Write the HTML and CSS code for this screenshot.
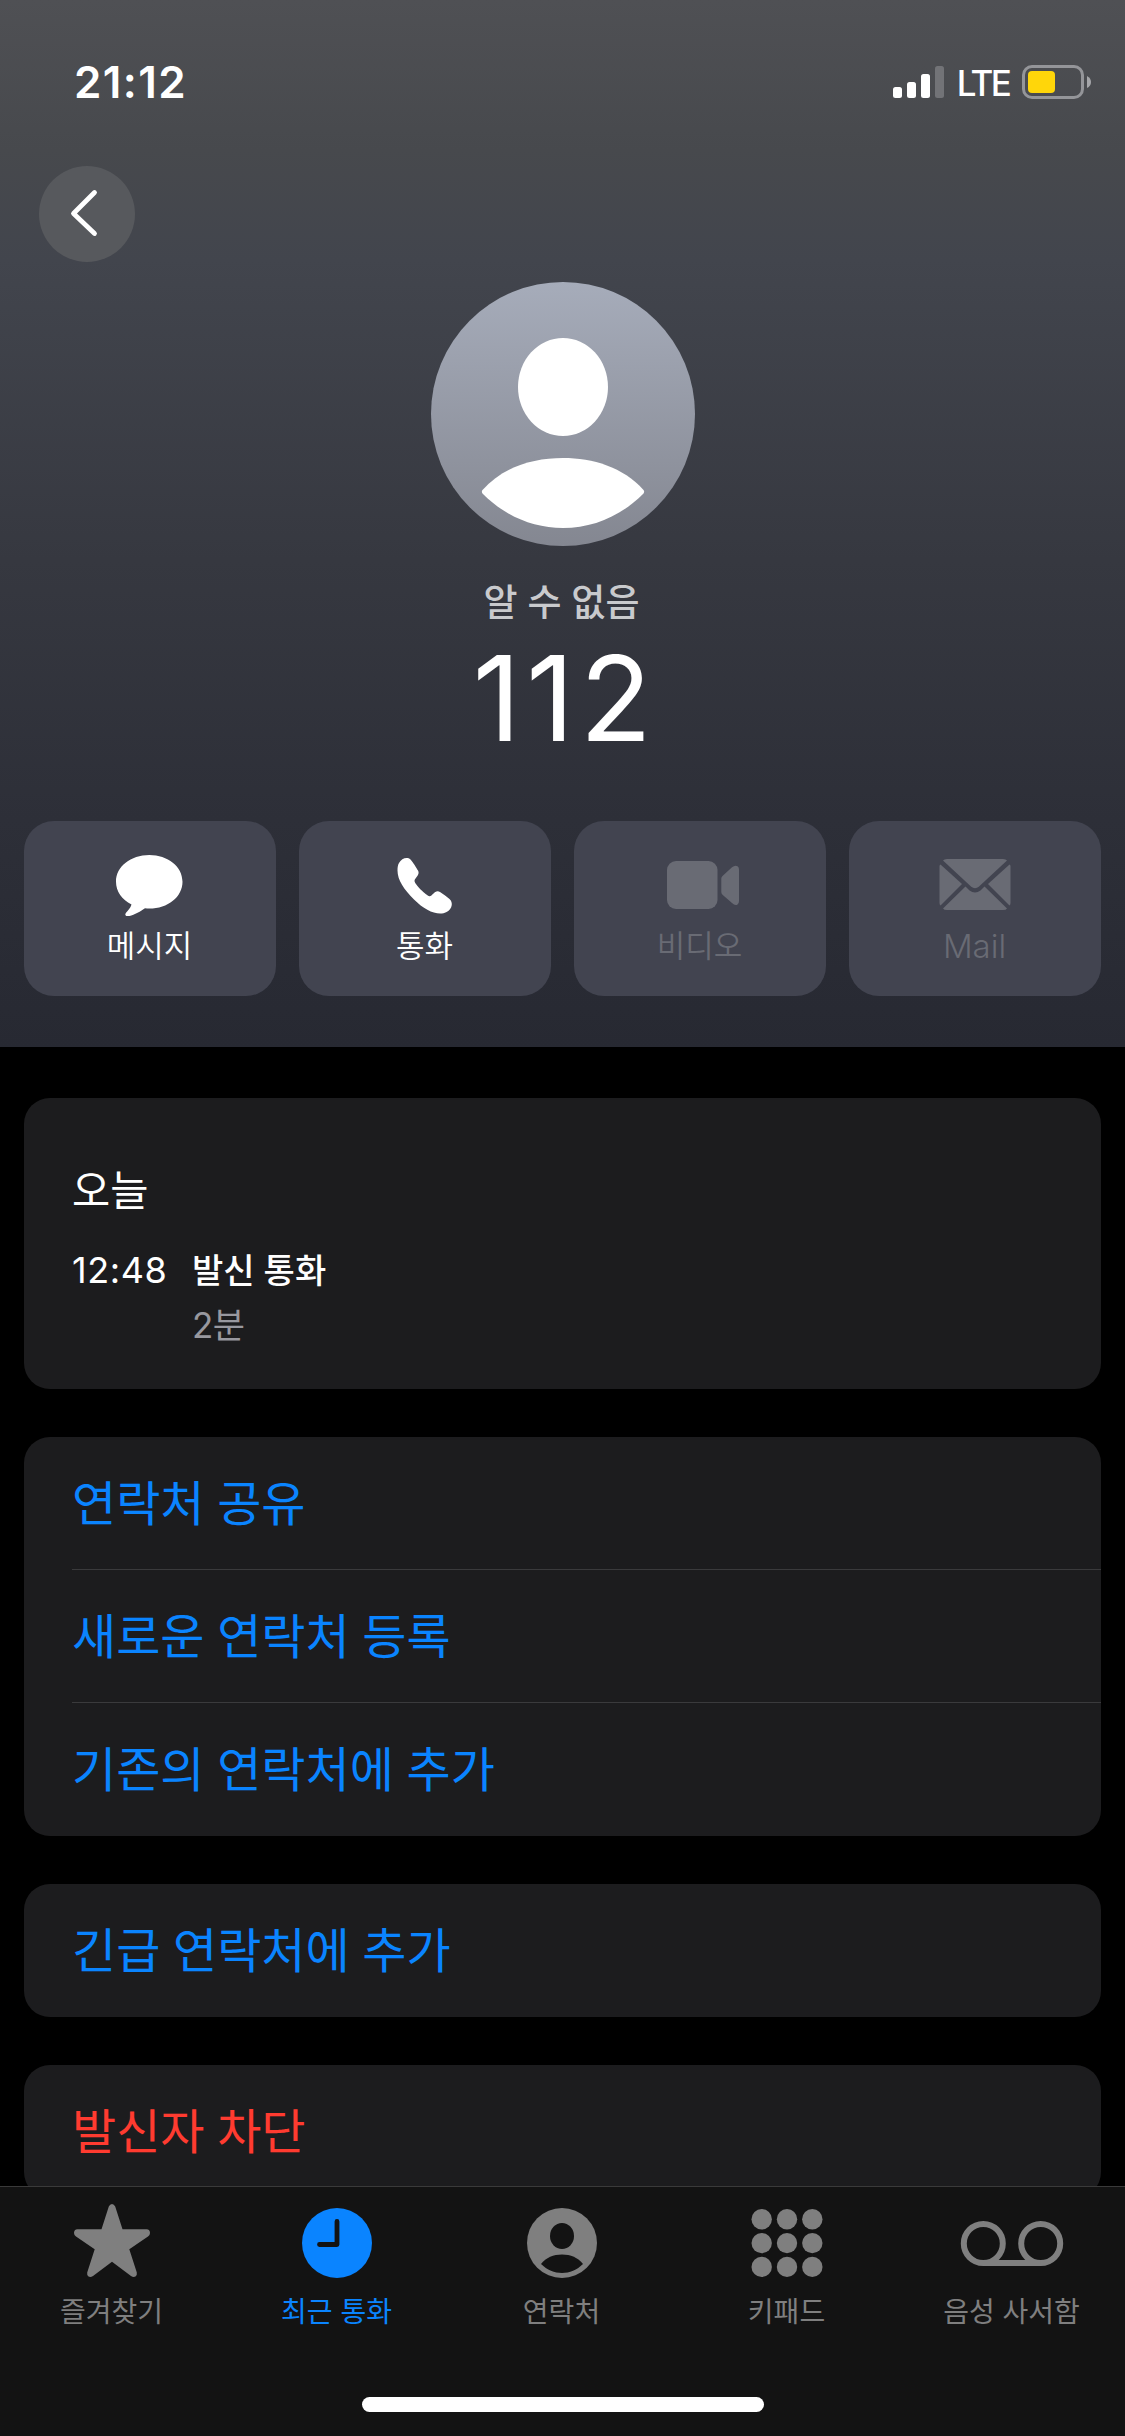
FILE: index.html
```html
<!DOCTYPE html>
<html lang="ko">
<head>
<meta charset="utf-8">
<title>112</title>
<link rel="stylesheet" href="styles.css">
</head>
<body>
<div class="phone">
  <div class="content">
    <header class="header">
      <div class="status">
        <span class="time">21:12</span>
        <div class="indicators">
          <svg class="signal" width="51" height="32" viewBox="0 0 51 32">
            <rect x="0" y="21" width="9" height="11" rx="2.5" fill="#fff"/>
            <rect x="14" y="16" width="9" height="16" rx="2.5" fill="#fff"/>
            <rect x="28" y="8" width="9" height="24" rx="2.5" fill="#fff"/>
            <rect x="42" y="0" width="9" height="32" rx="2.5" fill="#727377"/>
          </svg>
          <span class="network">LTE</span>
          <svg class="battery" width="70" height="34" viewBox="0 0 70 34">
            <rect x="1.5" y="1.5" width="59" height="31" rx="8.5" fill="none" stroke="#949599" stroke-width="3"/>
            <rect x="6" y="6" width="27" height="22" rx="4" fill="#ffd60a"/>
            <path d="M65 11Q69 13 69 17Q69 21 65 23Z" fill="#a5a6a9"/>
          </svg>
        </div>
      </div>
      <button class="back" aria-label="뒤로">
        <svg width="96" height="96" viewBox="0 0 96 96"><path d="M55.5 26.5L34.5 47.5L55.5 67.5" fill="none" stroke="#fff" stroke-width="4.8" stroke-linecap="round" stroke-linejoin="round"/></svg>
      </button>
      <svg class="avatar" width="264" height="264" viewBox="0 0 264 264">
        <defs><linearGradient id="av" x1="0" y1="0" x2="0" y2="1"><stop offset="0" stop-color="#a6acba"/><stop offset="1" stop-color="#848791"/></linearGradient></defs>
        <circle cx="132" cy="132" r="132" fill="url(#av)"/>
        <ellipse cx="132" cy="105" rx="45" ry="49" fill="#fff"/>
        <path d="M51.5 208Q50 210 52 212C74 234 102 246 132 246S190 234 212 212Q214 210 212.500 208C192 185 162 176 132 176S72 185 51.500 208Z" fill="#fff"/>
      </svg>
      <p class="subtitle">알 수 없음</p>
      <h1 class="number">112</h1>
      <div class="actions">
        <button class="action">
          <svg width="72" height="64" viewBox="0 0 72 64"><path d="M35.300 3C53.800 3 68.500 14.500 68.500 29.700S53.800 56.500 35.300 56.500C33.800 56.500 32.500 56.400 31 56.300C26.500 59.500 18.500 64.200 13.500 64.200C11 64.200 10.800 62.300 12 60.800C14 58.300 16.500 56 17.500 52.500C8 47.500 2 39.500 2 29.700C2 14.500 16.800 3 35.300 3Z" fill="#fff"/></svg>
          <span>메시지</span>
        </button>
        <button class="action">
          <svg width="72" height="64" viewBox="0 0 72 64"><path d="M10 11C12.500 6.500 18 4.500 21.500 7.500C23.500 9.500 27.500 16 29 18.500C31.500 23 25.500 26 25.500 29C26 32.500 37 43.500 40.500 44.200C43.500 44.500 46 37 51 40C53.500 41.500 58 45 60.500 47C65.500 51.500 62 59.500 54.500 61.200C46 63 35 57.500 25 47.500C15 37.500 8.500 28 8.500 18.500C8.500 15.500 8.800 13 10 11Z" fill="#fff"/></svg>
          <span>통화</span>
        </button>
        <button class="action disabled">
          <svg class="video" width="72" height="64" viewBox="0 0 72 64"><g fill="#696b74"><rect x="0" y="9" width="50.500" height="48" rx="9"/><path d="M54.300 26.500Q54.300 25 55.500 24L65 15.300Q68 12.800 70.500 14.200Q72 15.200 72 17.500V49Q72 51.500 70.500 52.500Q68 54 65 51L55.500 42.800Q54.300 41.800 54.300 40Z"/></g></svg>
          <span>비디오</span>
        </button>
        <button class="action disabled">
          <svg width="72" height="64" viewBox="0 0 72 64"><g fill="#696b74"><path d="M4 8.500Q5 7 8 7H64Q67 7 68 8.500L40 34.500Q36 38 32 34.500Z"/><path d="M.5 14Q.5 13 1.500 12.500L23 32L1.500 53.500Q.5 52.500 .5 51Z"/><path d="M71.500 14Q71.500 13 70.500 12.500L49 32L70.500 53.500Q71.500 52.500 71.500 51Z"/><path d="M4 56.500L26.500 34.500L30.500 38.500Q36 42.500 41.500 38.500L45.500 34.500L68 56.500Q67 58 64 58H8Q5 58 4 56.500Z"/></g></svg>
          <span class="latin">Mail</span>
        </button>
      </div>
    </header>
    <main class="list">
      <section class="card history">
        <h2>오늘</h2>
        <div class="call">
          <time>12:48</time>
          <div class="detail"><strong>발신 통화</strong><span>2분</span></div>
        </div>
      </section>
      <section class="card">
        <a class="row">연락처 공유</a>
        <a class="row">새로운 연락처 등록</a>
        <a class="row">기존의 연락처에 추가</a>
      </section>
      <section class="card"><a class="row">긴급 연락처에 추가</a></section>
      <section class="card"><a class="row danger">발신자 차단</a></section>
    </main>
  </div>
  <footer class="footer">
    <nav class="tabs">
      <a class="tab">
        <svg width="80" height="80" viewBox="0 0 80 80"><path d="M36.800 6.500Q38 4 40 4T43.200 6.500L50.500 29.300H74.500Q78 29.600 78 33Q78 35 76 36.500L57.300 49.300L64.800 72.500Q65.300 75 63.500 76.500Q61.500 77.500 59 76L40 61.700L21 76Q18.500 77.500 16.500 76.500Q14.700 75 15.200 72.500L22.700 49.300L4 36.500Q2 35 2 33Q2 29.600 5.500 29.300H29.500Z" fill="#7f7f7f"/></svg>
        <span>즐겨찾기</span>
      </a>
      <a class="tab active">
        <svg width="80" height="80" viewBox="0 0 80 80"><circle cx="40" cy="43" r="35" fill="#0a84ff"/><path d="M40 21.500V44.500H22.500" fill="none" stroke="#131313" stroke-width="4.800" stroke-linecap="round" stroke-linejoin="round"/></svg>
        <span>최근 통화</span>
      </a>
      <a class="tab">
        <svg width="80" height="80" viewBox="0 0 80 80"><circle cx="40" cy="43" r="35" fill="#7f7f7f"/><ellipse cx="40" cy="36" rx="12" ry="13" fill="#131313"/><path d="M19 64C24 57.500 31.500 54.500 40 54.500S56 57.500 61 64C55 70 47.500 73 40 73S25 70 19 64Z" fill="#131313"/></svg>
        <span>연락처</span>
      </a>
      <a class="tab">
        <svg width="80" height="80" viewBox="0 0 80 80"><g fill="#7f7f7f"><circle cx="14.700" cy="19.300" r="10.200"/><circle cx="40" cy="19.300" r="10.200"/><circle cx="65.300" cy="19.300" r="10.200"/><circle cx="14.700" cy="43.100" r="10.200"/><circle cx="40" cy="43.100" r="10.200"/><circle cx="65.300" cy="43.100" r="10.200"/><circle cx="14.700" cy="66.900" r="10.200"/><circle cx="40" cy="66.900" r="10.200"/><circle cx="65.300" cy="66.900" r="10.200"/></g></svg>
        <span>키패드</span>
      </a>
      <a class="tab">
        <svg width="104" height="80" viewBox="0 0 104 80"><g fill="none" stroke="#7f7f7f" stroke-width="6"><circle cx="23.300" cy="43.500" r="19.500"/><circle cx="80.700" cy="43.500" r="19.500"/><path d="M23.300 63H80.700"/></g></svg>
        <span>음성 사서함</span>
      </a>
    </nav>
    <div class="home"></div>
  </footer>
</div>
</body>
</html>
```
FILE: styles.css
```css
* { box-sizing: border-box; }
body {
  margin: 0;
  background: #000;
  color: #fff;
  font-family: Inter, "Noto Sans CJK KR", sans-serif;
}
p, h1, h2 { margin: 0; font-weight: 400; }
button { border: 0; padding: 0; color: inherit; font: inherit; }
svg { display: block; flex: none; }

.phone {
  width: 1125px;
  height: 2436px;
  display: flex;
  flex-direction: column;
  overflow: hidden;
}
.content { height: 2186px; overflow: hidden; flex: none; }

.header {
  height: 1047px;
  display: flex;
  flex-direction: column;
  align-items: center;
  background: linear-gradient(#4f5054 0, #47494d 150px, #42454d 260px, #363840 560px, #2d2f38 820px, #272932 1047px);
}
.status {
  align-self: stretch;
  height: 166px;
  padding: 56px 33px 0 74px;
  display: flex;
  justify-content: space-between;
}
.time { font-size: 44px; line-height: 52px; font-weight: 600; letter-spacing: 1.4px; }
.indicators { display: flex; height: 52px; align-items: center; }
.network { width: 78px; padding-top: 3px; text-align: center; font-size: 35px; line-height: 49px; font-weight: 450; letter-spacing: -2.6px; }
.back {
  align-self: flex-start;
  width: 96px;
  height: 96px;
  margin-left: 39px;
  border-radius: 50%;
  background: #57595d;
}
.avatar { margin-top: 20px; margin-left: 1px; }
.subtitle { margin-top: 29px; padding-right: 2px; height: 56px; line-height: 56px; font-size: 37px; font-weight: 500; color: #c9cacd; }
.number { height: 134px; padding-left: 5px; line-height: 135px; font-size: 118px; letter-spacing: 5.5px; }
.actions {
  align-self: stretch;
  margin: 56px 24px 0;
  display: grid;
  grid-template-columns: repeat(4, 1fr);
  gap: 23px;
}
.action {
  height: 175px;
  border-radius: 30px;
  background: #424450;
  display: flex;
  flex-direction: column;
  align-items: center;
  padding-top: 31px;
}
.action span { margin-top: 8px; padding-right: 1px; font-size: 31px; line-height: 44px; font-weight: 350; }
.action .video { margin-left: 5px; }
.action.disabled { color: #696b74; }
.action .latin { font-size: 33px; letter-spacing: 0; }

.list { padding: 51px 24px 0; display: flex; flex-direction: column; gap: 48px; }
.card { background: #1c1c1e; border-radius: 26px; overflow: hidden; }
.history { height: 291px; padding: 66px 48px 0; }
.history h2 { font-size: 41.5px; line-height: 54px; }
.call { margin-top: 25px; display: flex; font-size: 36px; }
.call time { width: 120px; line-height: 54px; letter-spacing: .6px; }
.detail { display: flex; flex-direction: column; line-height: 55px; }
.detail strong { font-size: 34px; font-weight: 500; }
.detail span { font-size: 35px; letter-spacing: -.5px; color: #98989f; }
.row {
  display: block;
  height: 133px;
  margin-left: 48px;
  line-height: 134px;
  font-size: 48px;
  word-spacing: -.8px;
  color: #0a84ff;
}
.row:not(:last-child) { border-bottom: 1px solid #3a3a3c; }
.row.danger { color: #ff3b30; }

.footer {
  height: 250px;
  background: #131313;
  border-top: 1px solid #3a3a3a;
  display: flex;
  flex-direction: column;
  align-items: center;
}
.tabs {
  align-self: flex-start;
  width: 1123px;
  height: 210px;
  padding-top: 13px;
  display: grid;
  grid-template-columns: repeat(5, 225px);
  justify-content: center;
}
.tab { display: flex; flex-direction: column; align-items: center; color: #7f7f7f; }
.tab span { margin-top: 12px; font-size: 28px; line-height: 40px; white-space: nowrap; }
.tab.active { color: #0a84ff; }
.home { width: 402px; height: 15px; border-radius: 8px; background: #fff; }
```
